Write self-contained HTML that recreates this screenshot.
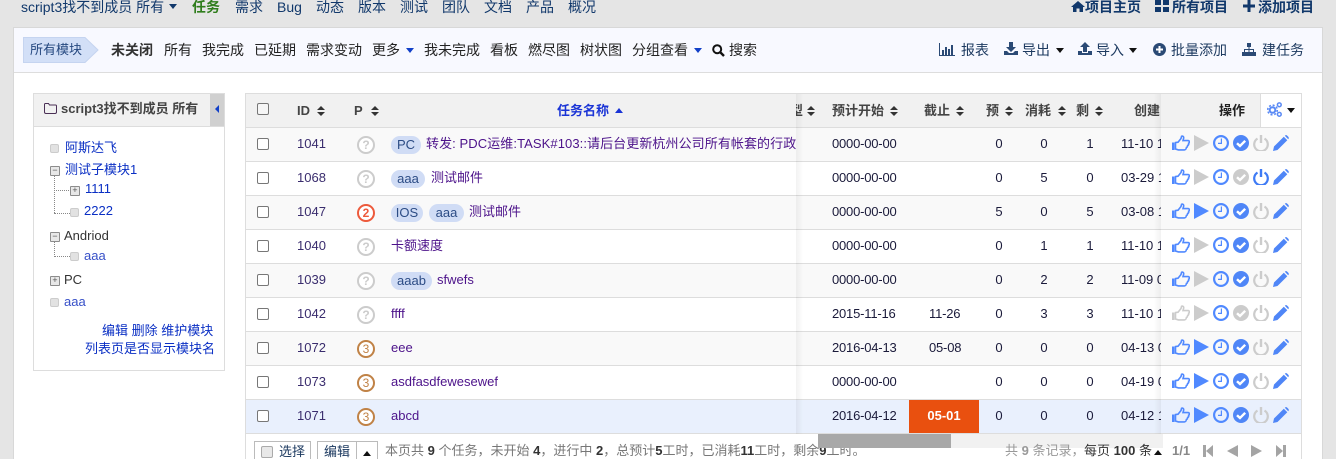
<!DOCTYPE html>
<html lang="zh"><head><meta charset="utf-8"><title>任务</title>
<style>
html,body{margin:0;padding:0;width:1336px;height:459px;overflow:hidden}
body{background:#e5e5e5;font:13px/18px "Liberation Sans","WenQuanYi Zen Hei","Noto Sans CJK SC",sans-serif;color:#1a1a3a}
#w{position:absolute;left:0;top:0;width:1336px;height:459px;overflow:hidden}
.a,.a>*{position:absolute;white-space:nowrap}
.a{left:0;top:0;width:0;height:0}
.n{font-size:14px;color:#11386b;top:-3px;line-height:20px}
.t{font-size:14px;color:#222;top:41px;line-height:18px}
.u{font-size:14px;color:#1d3a60;top:41px;line-height:18px}
.tree{color:#0a2fc4;font-size:13px;line-height:18px}
.car{width:0;height:0;border-left:4px solid transparent;border-right:4px solid transparent;border-top:5px solid #111}
.car.up{border-top:0;border-bottom:5px solid #111}
.b{width:9px;height:9px;background:#e2e2e2;border:1px solid #ccc;border-radius:2px;box-sizing:border-box}
.bx{width:10px;height:10px;border:1px solid #8c8c8c;background:#e8e8e8;box-sizing:border-box;border-radius:1px;font:9px/8px "Liberation Mono",monospace;text-align:center;color:#555}
.th{top:102px;font-weight:bold;color:#444;line-height:18px;font-size:13px}
.r{position:absolute;left:246px;width:1055px;height:33px;border-bottom:1px solid #ddd;background:#fff}
.r.o{background:#f9f9f9}
.r.s{background:#e9f0fd}
.r>*{position:absolute;white-space:nowrap;line-height:31px;top:0}
.cb{width:10px;height:10px;border:1px solid #777;border-radius:2px;left:11px;top:10px!important;background:#fff;box-sizing:content-box}
.id{left:51px;color:#3a2d6e}
.p{left:111px;top:8px!important;width:14px;height:14px;border:2px solid #ccc;border-radius:50%;text-align:center;line-height:14px!important;font-size:12px;font-weight:bold;color:#ccc;background:#fff}
.p.two{border-color:#ed5a3c;color:#ed5a3c}
.p.three{border-color:#c08246;color:#c08246;font-weight:normal}
.l{top:8px!important;height:18px;line-height:18px!important;background:#d0dcf5;color:#2c4c85;border-radius:9px;text-align:center}
.m{color:#4c128a}
.d{left:586px;letter-spacing:-.2px}
.e{left:683px;letter-spacing:-.2px}
.z{left:747px;width:12px;text-align:center}
.x{left:792px;width:12px;text-align:center}
.y{left:838px;width:12px;text-align:center}
.c{left:875px;width:40px;overflow:hidden}
.k{top:7px!important;height:16px;line-height:0!important}
svg{display:block}
</style></head>
<body>
<div id="w">
<svg width="0" height="0" style="position:absolute">
<symbol id="sort" viewBox="0 0 8 10"><path d="M4 0L8 4H0ZM4 10L0 6H8Z" fill="#333"/></symbol>
<symbol id="tb" viewBox="0 0 18 16"><path d="M0 7.5h2.500V15H0z" fill="#5089ff"/><path d="M3.500 7.600L6 7.200 9 3.500 9.600 1.200C11 .6 12 2 11.600 3.400L11 5.600 16.400 5.600C17.800 6 17.600 7.800 16.600 8.200 16.900 9.400 16.300 10.200 15.600 10.500 15.600 11.600 15 12.300 14.400 12.500 14.300 14 13.400 14.900 12.400 14.900H6.400L3.500 14Z" fill="none" stroke="#5089ff" stroke-width="1.600"/></symbol>
<symbol id="tg" viewBox="0 0 18 16"><path d="M0 7.5h2.500V15H0z" fill="#ccc"/><path d="M3.500 7.600L6 7.200 9 3.500 9.600 1.200C11 .6 12 2 11.600 3.400L11 5.600 16.400 5.600C17.800 6 17.600 7.800 16.600 8.200 16.900 9.400 16.300 10.200 15.600 10.500 15.600 11.600 15 12.300 14.400 12.500 14.300 14 13.400 14.900 12.400 14.900H6.400L3.500 14Z" fill="none" stroke="#ccc" stroke-width="1.600"/></symbol>
<symbol id="pb" viewBox="0 0 15 16"><path d="M0 0L15 8 0 16Z" fill="#5089ff"/></symbol>
<symbol id="pg" viewBox="0 0 15 16"><path d="M0 0L15 8 0 16Z" fill="#ccc"/></symbol>
<symbol id="ck" viewBox="0 0 16 16"><circle cx="8" cy="8" r="6.900" fill="none" stroke="#5089ff" stroke-width="2.200"/><path d="M9 3.500V9H5V7.800H7.800V3.500Z" fill="#5089ff"/></symbol>
<symbol id="ob" viewBox="0 0 16 16"><circle cx="8" cy="8" r="8" fill="#4f86f7"/><path d="M4 8.200L7 11 12.200 5.800" fill="none" stroke="#fff" stroke-width="2.400"/></symbol>
<symbol id="og" viewBox="0 0 16 16"><circle cx="8" cy="8" r="8" fill="#ccc"/><path d="M4 8.200L7 11 12.200 5.800" fill="none" stroke="#fff" stroke-width="2.400"/></symbol>
<symbol id="wb" viewBox="0 0 16 16"><path d="M4.500 3.600A6.800 6.800 0 1 0 11.500 3.600" fill="none" stroke="#3f7bf5" stroke-width="2.200"/><path d="M8 0V8" stroke="#3f7bf5" stroke-width="2.400"/></symbol>
<symbol id="wg" viewBox="0 0 16 16"><path d="M4.500 3.600A6.800 6.800 0 1 0 11.500 3.600" fill="none" stroke="#ccc" stroke-width="2.200"/><path d="M8 0V8" stroke="#ccc" stroke-width="2.400"/></symbol>
<symbol id="pe" viewBox="0 0 16 16"><path d="M0 16L1 11.500 10.800 1.700 14.300 5.200 4.500 15ZM11.800.8C12.600 0 13.600 0 14.300.7L15.300 1.700C16 2.400 16 3.400 15.200 4.200Z" fill="#4f86f7"/></symbol>
</svg>

<div class="a">
<span class="n" style="left:21px">script3找不到成员 所有</span><i class="car" style="left:169px;top:4px;border-top-color:#11386b"></i>
<span class="n" style="left:192px;color:#2f7d1c;font-weight:bold">任务</span>
<span class="n" style="left:235px">需求</span><span class="n" style="left:277px">Bug</span><span class="n" style="left:316px">动态</span><span class="n" style="left:358px">版本</span><span class="n" style="left:400px">测试</span><span class="n" style="left:442px">团队</span><span class="n" style="left:484px">文档</span><span class="n" style="left:526px">产品</span><span class="n" style="left:568px">概况</span>
<svg style="left:1071px;top:1px" width="14" height="11" viewBox="0 0 14 11"><path d="M7 0L14 6H12V11H8.500V7.500H5.500V11H2V6H0Z" fill="#11386b"/></svg>
<span class="n" style="left:1085px;font-weight:bold">项目主页</span>
<svg style="left:1155px;top:0" width="14" height="12" viewBox="0 0 14 12"><path d="M0 0h6v5H0zM8 0h6v5H8zM0 7h6v5H0zM8 7h6v5H8z" fill="#11386b"/></svg>
<span class="n" style="left:1172px;font-weight:bold">所有项目</span>
<svg style="left:1243px;top:0" width="12" height="12" viewBox="0 0 12 12"><path d="M4.500 0h3v4.500H12v3H7.500V12h-3V7.500H0v-3h4.500z" fill="#11386b"/></svg>
<span class="n" style="left:1258px;font-weight:bold">添加项目</span>
</div>

<div style="position:absolute;left:13px;top:27px;width:1308px;height:432px;background:#fff;border:1px solid #d8d8d8;border-bottom:0"></div>
<div style="position:absolute;left:14px;top:28px;width:1308px;height:44px;background:#f8f9ff;border-bottom:1px solid #ddd"></div>

<div class="a">
<svg style="left:23px;top:37px" width="76" height="26" viewBox="0 0 76 26"><path d="M.5.5H62L75 13 62 25.500H.5Z" fill="#d2dff7" stroke="#c5d4f0"/></svg>
<span style="left:30px;top:41px;color:#24477f;font-size:13px">所有模块</span>
<span class="t" style="left:111px;font-weight:bold;color:#333">未关闭</span><span class="t" style="left:164px">所有</span><span class="t" style="left:202px">我完成</span><span class="t" style="left:254px">已延期</span><span class="t" style="left:306px">需求变动</span><span class="t" style="left:372px">更多</span><i class="car" style="left:406px;top:48px;border-top-color:#1240c8"></i>
<span class="t" style="left:424px">我未完成</span><span class="t" style="left:490px">看板</span><span class="t" style="left:528px">燃尽图</span><span class="t" style="left:580px">树状图</span><span class="t" style="left:632px">分组查看</span><i class="car" style="left:694px;top:48px;border-top-color:#1240c8"></i>
<svg style="left:712px;top:44px" width="13" height="13" viewBox="0 0 13 13"><circle cx="5.200" cy="5.200" r="4" fill="none" stroke="#111" stroke-width="2"/><path d="M8 8L12 12" stroke="#111" stroke-width="2.400"/></svg>
<span class="t" style="left:729px">搜索</span>

<svg style="left:939px;top:43px" width="16" height="13" viewBox="0 0 16 13"><path d="M.5 0V12.500H16" fill="none" stroke="#2b4a75"/><path d="M3 7h2v5H3zM6 4h2v8H6zM9 6h2v6H9zM12 2h2v10h-2z" fill="#2b4a75"/></svg>
<span class="u" style="left:961px">报表</span>
<svg style="left:1004px;top:42px" width="14" height="13" viewBox="0 0 14 13"><path d="M5 0h4v5h3L7 10 2 5h3zM0 9h3l2 2h4l2-2h3v4H0z" fill="#2b4a75"/></svg>
<span class="u" style="left:1022px">导出</span><i class="car" style="left:1056px;top:48px"></i>
<svg style="left:1078px;top:42px" width="14" height="13" viewBox="0 0 14 13"><path d="M7 0l5 5H9v5H5V5H2zM0 9h4v2h6V9h4v4H0z" fill="#2b4a75"/></svg>
<span class="u" style="left:1096px">导入</span><i class="car" style="left:1129px;top:48px"></i>
<svg style="left:1153px;top:43px" width="13" height="13" viewBox="0 0 13 13"><circle cx="6.500" cy="6.500" r="6.500" fill="#2b4a75"/><path d="M5.500 3h2v2.500H10v2H7.500V10h-2V7.500H3v-2h2.500z" fill="#fff"/></svg>
<span class="u" style="left:1171px">批量添加</span>
<svg style="left:1242px;top:43px" width="14" height="13" viewBox="0 0 14 13"><path d="M5 0h4v4H7.500v2H12v3h2v4H9V9h2V7H7.500v2H9v4H5V9h1.500V7H3v2h2v4H0V9h2V6h4.500V4H5z" fill="#2b4a75"/></svg>
<span class="u" style="left:1262px">建任务</span>
</div>

<!-- sidebar -->
<div style="position:absolute;left:33px;top:93px;width:190px;height:276px;border:1px solid #ddd;background:#fff"></div>
<div style="position:absolute;left:34px;top:94px;width:190px;height:32px;background:#f1f1f1;border-bottom:1px solid #ddd"></div>
<div style="position:absolute;left:210px;top:94px;width:14px;height:32px;background:#d0d0d0"></div>
<div class="a">
<svg style="left:44px;top:103px" width="13" height="11" viewBox="0 0 13 11"><path d="M.5 9V1.500Q.5.500 1.500.500H4.500L5.500 2H11.500Q12.500 2 12.500 3V9Q12.500 10.500 11 10.500H2Q.5 10.500 .5 9Z" fill="none" stroke="#4a2f55"/></svg>
<span style="left:61px;top:100px;font-weight:bold;color:#444;font-size:13px">script3找不到成员 所有</span>
<i style="left:215px;top:105px;width:0;height:0;border-top:4px solid transparent;border-bottom:4px solid transparent;border-right:4px solid #1240c8"></i>

<i style="left:54px;top:176px;height:37px;border-left:1px dotted #888"></i>
<i style="left:54px;top:190px;width:15px;border-top:1px dotted #888"></i>
<i style="left:54px;top:213px;width:16px;border-top:1px dotted #888"></i>
<i style="left:54px;top:241px;height:16px;border-left:1px dotted #888"></i>
<i style="left:54px;top:256px;width:16px;border-top:1px dotted #888"></i>

<i class="b" style="left:50px;top:144px"></i><span class="tree" style="left:65px;top:139px">阿斯达飞</span>
<i class="bx" style="left:50px;top:166px">−</i><span class="tree" style="left:65px;top:161px">测试子模块1</span>
<i class="bx" style="left:70px;top:186px">+</i><span class="tree" style="left:85px;top:180px">1111</span>
<i class="b" style="left:70px;top:208px"></i><span class="tree" style="left:84px;top:202px">2222</span>
<i class="bx" style="left:50px;top:232px">−</i><span class="tree" style="left:64px;top:227px;color:#333">Andriod</span>
<i class="b" style="left:70px;top:252px"></i><span class="tree" style="left:84px;top:247px;color:#3750c8">aaa</span>
<i class="bx" style="left:50px;top:276px">+</i><span class="tree" style="left:64px;top:271px;color:#333">PC</span>
<i class="b" style="left:50px;top:298px"></i><span class="tree" style="left:64px;top:293px;color:#3750c8">aaa</span>
<span class="tree" style="left:102px;top:322px">编辑 删除 维护模块</span>
<span class="tree" style="left:85px;top:340px">列表页是否显示模块名</span>
</div>

<!-- table frame -->
<div style="position:absolute;left:245px;top:93px;width:1055px;height:33px;background:#f1f1f1;border:1px solid #ddd"></div>
<div style="position:absolute;left:1260px;top:94px;width:40px;height:33px;background:#fff;border-left:1px solid #ddd"></div>
<div style="position:absolute;left:245px;top:127px;width:1px;height:332px;background:#ddd"></div>
<div style="position:absolute;left:1301px;top:127px;width:1px;height:332px;background:#ddd"></div>

<div class="a">
<i style="left:257px;top:103px;width:10px;height:10px;border:1px solid #777;border-radius:2px;background:#f6f6f6"></i>
<span class="th" style="left:297px">ID</span><svg style="left:317px;top:106px" width="8" height="10"><use href="#sort"/></svg>
<span class="th" style="left:354px">P</span><svg style="left:371px;top:106px" width="8" height="10"><use href="#sort"/></svg>
<span class="th" style="left:557px;color:#1a34d6">任务名称</span><i class="car up" style="left:615px;top:108px;border-bottom-color:#1a34d6"></i>
<span class="th" style="left:796px;width:7px;overflow:hidden"><span style="margin-left:-6px">型</span></span>
<svg style="left:807px;top:106px" width="8" height="10"><use href="#sort"/></svg>
<span class="th" style="left:832px">预计开始</span><svg style="left:890px;top:106px" width="8" height="10"><use href="#sort"/></svg>
<span class="th" style="left:924px">截止</span><svg style="left:956px;top:106px" width="8" height="10"><use href="#sort"/></svg>
<span class="th" style="left:986px">预</span><svg style="left:1005px;top:106px" width="8" height="10"><use href="#sort"/></svg>
<span class="th" style="left:1025px">消耗</span><svg style="left:1058px;top:106px" width="8" height="10"><use href="#sort"/></svg>
<span class="th" style="left:1076px">剩</span><svg style="left:1095px;top:106px" width="8" height="10"><use href="#sort"/></svg>
<span class="th" style="left:1134px">创建</span>
<span class="th" style="left:1219px;color:#222">操作</span>
<svg style="left:1267px;top:102px" width="15" height="15" viewBox="0 0 15 15"><circle cx="5.500" cy="8" r="2.800" fill="none" stroke="#5a8af5" stroke-width="2"/><circle cx="5.500" cy="8" r="4.800" fill="none" stroke="#5a8af5" stroke-width="1.600" stroke-dasharray="2 1.770"/><circle cx="12.300" cy="2.800" r="1.900" fill="none" stroke="#5a8af5" stroke-width="1.500"/><circle cx="12.300" cy="12.300" r="1.900" fill="none" stroke="#5a8af5" stroke-width="1.500"/></svg>
<i class="car" style="left:1287px;top:108px"></i>
</div>

<!-- rows -->
<div class="r o" style="top:128px"><i class="cb"></i><span class="id">1041</span><b class="p">?</b><span class="l" style="left:145px;width:30px">PC</span><span class="m" style="left:180px;width:370px;overflow:hidden;letter-spacing:.08px">转发: PDC运维:TASK#103::请后台更新杭州公司所有帐套的行政</span><span class="d">0000-00-00</span><span class="z">0</span><span class="x">0</span><span class="y">1</span><span class="c">11-10 1</span><span class="k" style="left:926px"><svg width="18" height="16"><use href="#tb"/></svg></span><span class="k" style="left:948px"><svg width="15" height="16"><use href="#pg"/></svg></span><span class="k" style="left:967px"><svg width="16" height="16"><use href="#ck"/></svg></span><span class="k" style="left:987px"><svg width="16" height="16"><use href="#ob"/></svg></span><span class="k" style="left:1007px"><svg width="16" height="16"><use href="#wg"/></svg></span><span class="k" style="left:1027px"><svg width="16" height="16"><use href="#pe"/></svg></span></div>

<div class="r" style="top:162px"><i class="cb"></i><span class="id">1068</span><b class="p">?</b><span class="l" style="left:145px;width:34px">aaa</span><span class="m" style="left:185px">测试邮件</span><span class="d">0000-00-00</span><span class="z">0</span><span class="x">5</span><span class="y">0</span><span class="c">03-29 1</span><span class="k" style="left:926px"><svg width="18" height="16"><use href="#tb"/></svg></span><span class="k" style="left:948px"><svg width="15" height="16"><use href="#pg"/></svg></span><span class="k" style="left:967px"><svg width="16" height="16"><use href="#ck"/></svg></span><span class="k" style="left:987px"><svg width="16" height="16"><use href="#og"/></svg></span><span class="k" style="left:1007px"><svg width="16" height="16"><use href="#wb"/></svg></span><span class="k" style="left:1027px"><svg width="16" height="16"><use href="#pe"/></svg></span></div>

<div class="r o" style="top:196px"><i class="cb"></i><span class="id">1047</span><b class="p two">2</b><span class="l" style="left:145px;width:32px">IOS</span><span class="l" style="left:183px;width:35px">aaa</span><span class="m" style="left:223px">测试邮件</span><span class="d">0000-00-00</span><span class="z">5</span><span class="x">0</span><span class="y">5</span><span class="c">03-08 1</span><span class="k" style="left:926px"><svg width="18" height="16"><use href="#tb"/></svg></span><span class="k" style="left:948px"><svg width="15" height="16"><use href="#pb"/></svg></span><span class="k" style="left:967px"><svg width="16" height="16"><use href="#ck"/></svg></span><span class="k" style="left:987px"><svg width="16" height="16"><use href="#ob"/></svg></span><span class="k" style="left:1007px"><svg width="16" height="16"><use href="#wg"/></svg></span><span class="k" style="left:1027px"><svg width="16" height="16"><use href="#pe"/></svg></span></div>

<div class="r" style="top:230px"><i class="cb"></i><span class="id">1040</span><b class="p">?</b><span class="m" style="left:145px">卡额速度</span><span class="d">0000-00-00</span><span class="z">0</span><span class="x">1</span><span class="y">1</span><span class="c">11-10 1</span><span class="k" style="left:926px"><svg width="18" height="16"><use href="#tb"/></svg></span><span class="k" style="left:948px"><svg width="15" height="16"><use href="#pg"/></svg></span><span class="k" style="left:967px"><svg width="16" height="16"><use href="#ck"/></svg></span><span class="k" style="left:987px"><svg width="16" height="16"><use href="#ob"/></svg></span><span class="k" style="left:1007px"><svg width="16" height="16"><use href="#wg"/></svg></span><span class="k" style="left:1027px"><svg width="16" height="16"><use href="#pe"/></svg></span></div>

<div class="r o" style="top:264px"><i class="cb"></i><span class="id">1039</span><b class="p">?</b><span class="l" style="left:145px;width:41px">aaab</span><span class="m" style="left:191px">sfwefs</span><span class="d">0000-00-00</span><span class="z">0</span><span class="x">2</span><span class="y">2</span><span class="c">11-09 0</span><span class="k" style="left:926px"><svg width="18" height="16"><use href="#tb"/></svg></span><span class="k" style="left:948px"><svg width="15" height="16"><use href="#pg"/></svg></span><span class="k" style="left:967px"><svg width="16" height="16"><use href="#ck"/></svg></span><span class="k" style="left:987px"><svg width="16" height="16"><use href="#ob"/></svg></span><span class="k" style="left:1007px"><svg width="16" height="16"><use href="#wg"/></svg></span><span class="k" style="left:1027px"><svg width="16" height="16"><use href="#pe"/></svg></span></div>

<div class="r" style="top:298px"><i class="cb"></i><span class="id">1042</span><b class="p">?</b><span class="m" style="left:145px">ffff</span><span class="d">2015-11-16</span><span class="e">11-26</span><span class="z">0</span><span class="x">3</span><span class="y">3</span><span class="c">11-10 1</span><span class="k" style="left:926px"><svg width="18" height="16"><use href="#tg"/></svg></span><span class="k" style="left:948px"><svg width="15" height="16"><use href="#pg"/></svg></span><span class="k" style="left:967px"><svg width="16" height="16"><use href="#ck"/></svg></span><span class="k" style="left:987px"><svg width="16" height="16"><use href="#og"/></svg></span><span class="k" style="left:1007px"><svg width="16" height="16"><use href="#wg"/></svg></span><span class="k" style="left:1027px"><svg width="16" height="16"><use href="#pe"/></svg></span></div>

<div class="r o" style="top:332px"><i class="cb"></i><span class="id">1072</span><b class="p three">3</b><span class="m" style="left:145px">eee</span><span class="d">2016-04-13</span><span class="e">05-08</span><span class="z">0</span><span class="x">0</span><span class="y">0</span><span class="c">04-13 0</span><span class="k" style="left:926px"><svg width="18" height="16"><use href="#tb"/></svg></span><span class="k" style="left:948px"><svg width="15" height="16"><use href="#pb"/></svg></span><span class="k" style="left:967px"><svg width="16" height="16"><use href="#ck"/></svg></span><span class="k" style="left:987px"><svg width="16" height="16"><use href="#ob"/></svg></span><span class="k" style="left:1007px"><svg width="16" height="16"><use href="#wg"/></svg></span><span class="k" style="left:1027px"><svg width="16" height="16"><use href="#pe"/></svg></span></div>

<div class="r" style="top:366px"><i class="cb"></i><span class="id">1073</span><b class="p three">3</b><span class="m" style="left:145px">asdfasdfewesewef</span><span class="d">0000-00-00</span><span class="z">0</span><span class="x">0</span><span class="y">0</span><span class="c">04-19 0</span><span class="k" style="left:926px"><svg width="18" height="16"><use href="#tb"/></svg></span><span class="k" style="left:948px"><svg width="15" height="16"><use href="#pb"/></svg></span><span class="k" style="left:967px"><svg width="16" height="16"><use href="#ck"/></svg></span><span class="k" style="left:987px"><svg width="16" height="16"><use href="#ob"/></svg></span><span class="k" style="left:1007px"><svg width="16" height="16"><use href="#wg"/></svg></span><span class="k" style="left:1027px"><svg width="16" height="16"><use href="#pe"/></svg></span></div>

<div class="r s" style="top:400px"><i class="cb"></i><span class="id">1071</span><b class="p three">3</b><span class="m" style="left:145px">abcd</span><span class="d">2016-04-12</span><span style="left:663px;width:70px;height:33px;background:#e9500f;color:#fff;font-weight:bold;text-align:center">05-01</span><span class="z">0</span><span class="x">0</span><span class="y">0</span><span class="c">04-12 1</span><span class="k" style="left:926px"><svg width="18" height="16"><use href="#tb"/></svg></span><span class="k" style="left:948px"><svg width="15" height="16"><use href="#pb"/></svg></span><span class="k" style="left:967px"><svg width="16" height="16"><use href="#ck"/></svg></span><span class="k" style="left:987px"><svg width="16" height="16"><use href="#ob"/></svg></span><span class="k" style="left:1007px"><svg width="16" height="16"><use href="#wg"/></svg></span><span class="k" style="left:1027px"><svg width="16" height="16"><use href="#pe"/></svg></span></div>

<!-- fixed col shadows -->
<div style="position:absolute;left:796px;top:94px;width:7px;height:340px;background:linear-gradient(90deg,rgba(0,0,0,.05),rgba(0,0,0,0))"></div>
<div style="position:absolute;left:1154px;top:94px;width:7px;height:340px;background:linear-gradient(90deg,rgba(0,0,0,0),rgba(0,0,0,.05))"></div>

<!-- footer -->
<div class="a">
<span style="left:385px;top:442px;color:#777">本页共 <b style="color:#333">9</b> 个任务，未开始 <b style="color:#333">4</b>，进行中 <b style="color:#333">2</b>，总预计<b style="color:#333">5</b>工时，已消耗<b style="color:#333">11</b>工时，剩余<b style="color:#333">9</b>工时。</span>
<div style="left:818px;top:434px;width:345px;height:14px;background:#f1f1f1"></div>
<div style="left:818px;top:434px;width:133px;height:14px;background:#a8a8a8"></div>
<div style="left:254px;top:441px;width:55px;height:20px;border:1px solid #bbb;background:#fff"></div>
<i style="left:261px;top:446px;width:10px;height:10px;background:#e8e8e8;border:1px solid #aaa;border-radius:2px"></i>
<span style="left:279px;top:443px;color:#1d3a60">选择</span>
<div style="left:317px;top:441px;width:38px;height:20px;border:1px solid #bbb;background:#fff"></div>
<div style="left:357px;top:441px;width:20px;height:20px;border:1px solid #bbb;border-left:0;background:#fff"></div>
<span style="left:324px;top:443px;color:#1d3a60">编辑</span>
<i class="car up" style="left:363px;top:451px"></i>
<span style="left:1005px;top:442px;color:#999">共 <b>9</b> 条记录，</span>
<span style="left:1084px;top:442px;color:#333">每页 <b>100</b> 条</span><i class="car up" style="left:1154px;top:450px"></i>
<span style="left:1172px;top:442px;color:#888;font-weight:bold">1/1</span>
<svg style="left:1203px;top:445px" width="84" height="12" viewBox="0 0 84 12"><path d="M0 0h3v12H0zM10 0v12L3 6zM35 0v12L24 6zM48 0v12L59 6zM73 0l7 6-7 6zM80 0h3v12h-3z" fill="#a4a4a4"/></svg>
</div>
</div>
</body></html>
